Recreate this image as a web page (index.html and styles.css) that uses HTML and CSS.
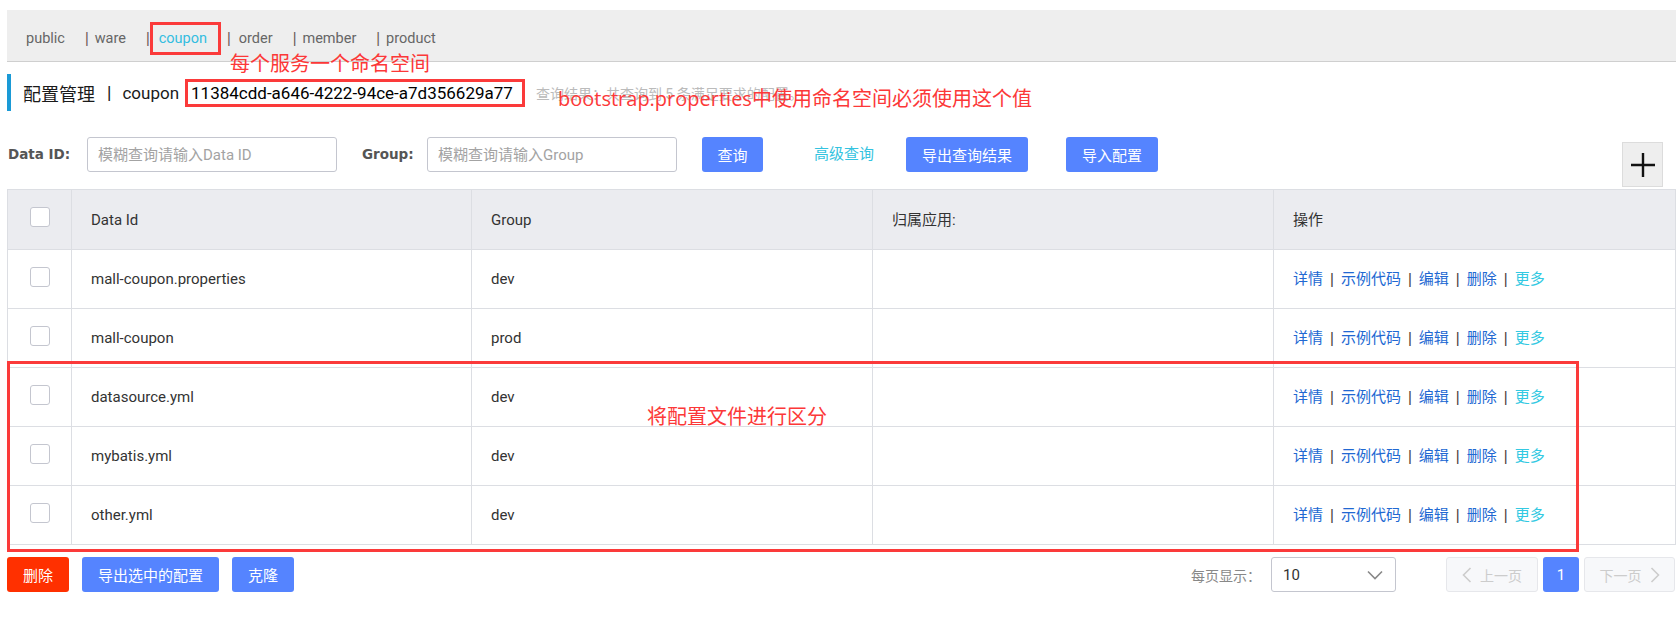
FILE: index.html
```html
<!DOCTYPE html>
<html lang="zh-CN">
<head>
<meta charset="utf-8">
<title>配置管理</title>
<link rel="stylesheet" href="styles.css">
</head>
<body>
<div class="page">
  <nav class="ns-bar">
    <span class="ns ns-first">public</span>
    <span class="sep">|</span><span class="ns">ware</span>
    <span class="sep sep-tight">|</span><span class="ns ns-active">coupon</span>
    <span class="sep sep-after-box">|</span><span class="ns">order</span>
    <span class="sep">|</span><span class="ns">member</span>
    <span class="sep">|</span><span class="ns">product</span>
  </nav>

  <div class="title-row">
    <span class="title-cn">配置管理</span>
    <span class="title-sep">|</span>
    <span class="title-en">coupon</span>
    <span class="ns-id">11384cdd-a646-4222-94ce-a7d356629a77</span>
    <span class="result">查询结果：共查询到 5 条满足要求的配置。</span>
  </div>

  <div class="filter-row">
    <span class="flabel flabel-id">Data ID:</span>
    <input class="finput" type="text" placeholder="模糊查询请输入Data ID">
    <span class="flabel flabel-group">Group:</span>
    <input class="finput" type="text" placeholder="模糊查询请输入Group">
    <button class="btn btn-primary btn-query">查询</button>
    <a class="adv-link">高级查询</a>
    <button class="btn btn-primary btn-export">导出查询结果</button>
    <button class="btn btn-primary btn-import">导入配置</button>
    <button class="add-btn" aria-label="新建配置">
      <svg width="26" height="26" viewBox="0 0 26 26"><path d="M13 1v24M1 13h24" stroke="#111" stroke-width="2.4" fill="none"/></svg>
    </button>
  </div>

  <table class="cfg-table">
    <thead>
      <tr>
        <th class="c-cb"><span class="cb"></span></th>
        <th class="c-id">Data Id</th>
        <th class="c-group">Group</th>
        <th class="c-app">归属应用:</th>
        <th class="c-op">操作</th>
      </tr>
    </thead>
    <tbody>
      <tr>
        <td class="c-cb"><span class="cb"></span></td>
        <td>mall-coupon.properties</td>
        <td>dev</td>
        <td></td>
        <td class="ops"><a class="op">详情</a><span class="op-sep">|</span><a class="op">示例代码</a><span class="op-sep">|</span><a class="op">编辑</a><span class="op-sep">|</span><a class="op">删除</a><span class="op-sep">|</span><a class="op op-more">更多</a></td>
      </tr>
      <tr>
        <td class="c-cb"><span class="cb"></span></td>
        <td>mall-coupon</td>
        <td>prod</td>
        <td></td>
        <td class="ops"><a class="op">详情</a><span class="op-sep">|</span><a class="op">示例代码</a><span class="op-sep">|</span><a class="op">编辑</a><span class="op-sep">|</span><a class="op">删除</a><span class="op-sep">|</span><a class="op op-more">更多</a></td>
      </tr>
      <tr>
        <td class="c-cb"><span class="cb"></span></td>
        <td>datasource.yml</td>
        <td>dev</td>
        <td></td>
        <td class="ops"><a class="op">详情</a><span class="op-sep">|</span><a class="op">示例代码</a><span class="op-sep">|</span><a class="op">编辑</a><span class="op-sep">|</span><a class="op">删除</a><span class="op-sep">|</span><a class="op op-more">更多</a></td>
      </tr>
      <tr>
        <td class="c-cb"><span class="cb"></span></td>
        <td>mybatis.yml</td>
        <td>dev</td>
        <td></td>
        <td class="ops"><a class="op">详情</a><span class="op-sep">|</span><a class="op">示例代码</a><span class="op-sep">|</span><a class="op">编辑</a><span class="op-sep">|</span><a class="op">删除</a><span class="op-sep">|</span><a class="op op-more">更多</a></td>
      </tr>
      <tr>
        <td class="c-cb"><span class="cb"></span></td>
        <td>other.yml</td>
        <td>dev</td>
        <td></td>
        <td class="ops"><a class="op">详情</a><span class="op-sep">|</span><a class="op">示例代码</a><span class="op-sep">|</span><a class="op">编辑</a><span class="op-sep">|</span><a class="op">删除</a><span class="op-sep">|</span><a class="op op-more">更多</a></td>
      </tr>
    </tbody>
  </table>

  <div class="footer">
    <button class="btn btn-danger btn-del">删除</button>
    <button class="btn btn-primary btn-export-sel">导出选中的配置</button>
    <button class="btn btn-primary btn-clone">克隆</button>
    <span class="page-size-label">每页显示：</span>
    <div class="select">
      <span class="select-val">10</span>
      <svg class="select-arrow" width="16" height="10" viewBox="0 0 16 10"><path d="M1 1.5l7 7 7-7" stroke="#888" stroke-width="1.6" fill="none"/></svg>
    </div>
    <button class="pg pg-prev" disabled>
      <svg width="10" height="16" viewBox="0 0 10 16"><path d="M8.5 1L1.5 8l7 7" stroke="#ccc" stroke-width="1.6" fill="none"/></svg>
      <span>上一页</span>
    </button>
    <button class="pg pg-cur">1</button>
    <button class="pg pg-next" disabled>
      <span>下一页</span>
      <svg width="10" height="16" viewBox="0 0 10 16"><path d="M1.5 1l7 7-7 7" stroke="#ccc" stroke-width="1.6" fill="none"/></svg>
    </button>
  </div>

  <div class="note note-ns">每个服务一个命名空间</div>
  <div class="note note-boot">bootstrap.properties中使用命名空间必须使用这个值</div>
  <div class="note note-split">将配置文件进行区分</div>
  <div class="mark-box"></div>
</div>
</body>
</html>
```

FILE: styles.css
```css
* { box-sizing: border-box; }

html, body {
  margin: 0;
  padding: 0;
  background: #fff;
}

body {
  font-family: "Roboto", "Noto Sans CJK SC", sans-serif;
  font-size: 15px;
  color: #333;
}

.page {
  position: relative;
  width: 1676px;
  height: 632px;
  overflow: hidden;
  padding: 10px 0 0 7px;
}

/* namespace bar */
.ns-bar {
  display: flex;
  align-items: center;
  height: 52px;
  padding: 5px 0 0 19px;
  background: #eeeeee;
  border-bottom: 1px solid #cfcfcf;
  font-size: 14.5px;
  color: #666;
}

.ns { line-height: 27px; }

.sep {
  font-family: "Liberation Sans", sans-serif;
  color: #6b5a55;
  margin: 0 6px 0 20px;
}

.sep-tight { margin-right: 0; }
.sep-after-box { margin-left: 6px; margin-right: 8px; }

.ns-active {
  color: #33bde0;
  border: 3px solid #fb3a3a;
  padding: 0 11px 0 6px;
}

/* title row */
.title-row {
  display: flex;
  align-items: center;
  height: 37px;
  margin-top: 12px;
  border-left: 4px solid #1a9ad6;
  padding-left: 12px;
  color: #1a1a1a;
}

.title-cn { font-size: 18px; }

.title-sep {
  font-family: "Liberation Sans", sans-serif;
  font-size: 17px;
  margin: 0 11px 0 12px;
  color: #222;
}

.title-en { font-size: 17px; }

.ns-id {
  font-size: 17px;
  color: #000;
  margin-left: 6px;
  height: 28px;
  line-height: 22px;
  border: 3px solid #fb3a3a;
  padding: 0 9px 0 3px;
}

.result {
  font-size: 14px;
  color: #bbb;
  margin-left: 11px;
}

/* filter row */
.filter-row {
  display: flex;
  align-items: flex-start;
  margin-top: 26px;
  height: 50px;
}

.flabel {
  font-family: "DejaVu Sans", sans-serif;
  font-weight: bold;
  font-size: 13.5px;
  color: #555;
  line-height: 35px;
}

.flabel-id { width: 80px; padding-left: 1px; }
.flabel-group { width: 65px; margin-left: 25px; }

.finput {
  width: 250px;
  height: 35px;
  border: 1px solid #c4c6cf;
  border-radius: 3px;
  padding: 0 10px;
  font-family: "Roboto", "Noto Sans CJK SC", sans-serif;
  font-size: 15px;
  color: #333;
  outline: none;
}

.finput::placeholder { color: #a3a3a3; }

.btn {
  height: 35px;
  border: none;
  border-radius: 3px;
  font-family: "Roboto", "Noto Sans CJK SC", sans-serif;
  font-size: 15px;
  color: #fff;
  padding: 0 17px;
  cursor: pointer;
}

.btn-primary { background: #5584ff; }
.btn-danger { background: #ff3000; }

.btn-query { margin-left: 25px; width: 61px; padding: 0; }
.adv-link {
  margin-left: 51px;
  line-height: 35px;
  color: #33c3e0;
  cursor: pointer;
}
.btn-export { margin-left: 32px; width: 122px; padding: 0; }
.btn-import { margin-left: 38px; width: 92px; padding: 0; }

.add-btn {
  margin-left: auto;
  margin-right: 13px;
  margin-top: 5px;
  width: 41px;
  height: 45px;
  padding: 0;
  background: #eeeeee;
  border: 1px solid #dcdcdc;
  display: flex;
  align-items: center;
  justify-content: center;
}

/* table */
.cfg-table {
  margin-top: 2px;
  width: 1669px;
  table-layout: fixed;
  border-collapse: separate;
  border-spacing: 0;
  border-top: 1px solid #dcdee3;
  border-left: 1px solid #dcdee3;
}

.cfg-table th,
.cfg-table td {
  border-right: 1px solid #dcdee3;
  border-bottom: 1px solid #dcdee3;
  padding: 0 0 0 19px;
  text-align: left;
  vertical-align: middle;
  font-weight: normal;
  line-height: 20px;
  color: #333;
  white-space: nowrap;
}

.cfg-table th {
  background: #ebecf0;
  height: 60px;
}

.cfg-table td { height: 59px; }

.cfg-table .c-cb { width: 64px; padding: 0; }
.cfg-table .c-id { width: 400px; }
.cfg-table .c-group { width: 401px; }
.cfg-table .c-app { width: 401px; }

.cb {
  display: block;
  width: 20px;
  height: 20px;
  margin: -5px auto 0;
  border: 1px solid #c4c6cf;
  border-radius: 3px;
  background: #fff;
}

.op { color: #2168d2; cursor: pointer; }
.op-more { color: #33c9e2; }

.op-sep {
  font-family: "Liberation Sans", sans-serif;
  color: #4a4040;
  margin: 0 7px;
}

/* footer */
.footer {
  display: flex;
  align-items: center;
  margin-top: 12px;
  height: 35px;
  padding-right: 1px;
}

.btn-del { width: 62px; padding: 0; }
.btn-export-sel { margin-left: 13px; width: 137px; padding: 0; }
.btn-clone { margin-left: 13px; width: 62px; padding: 0; }

.page-size-label {
  margin-left: auto;
  font-size: 14px;
  color: #888;
}

.select {
  margin-left: 10px;
  width: 125px;
  height: 35px;
  border: 1px solid #c4c6cf;
  border-radius: 3px;
  display: flex;
  align-items: center;
  padding: 0 12px 0 11px;
}

.select-val { font-size: 15px; color: #333; }
.select-arrow { margin-left: auto; }

.pg {
  height: 35px;
  border-radius: 3px;
  font-family: "Roboto", "Noto Sans CJK SC", sans-serif;
  font-size: 14px;
  padding: 0;
  display: flex;
  align-items: center;
  justify-content: center;
}

.pg-prev,
.pg-next {
  width: 92px;
  background: #f7f8fa;
  border: 1px solid #e6e7eb;
  color: #ccc;
  gap: 8px;
}

.pg-prev { margin-left: 50px; }
.pg-next { width: 91px; margin-left: 5px; }

.pg-cur {
  width: 36px;
  margin-left: 5px;
  background: #5584ff;
  border: none;
  color: #fff;
  font-size: 15px;
}

/* annotations drawn over the screenshot */
.note {
  position: absolute;
  font-family: "Open Sans", "Noto Sans CJK SC", sans-serif;
  font-size: 20px;
  line-height: 20px;
  color: #fc3838;
  white-space: nowrap;
}

.note-ns { left: 230px; top: 54px; }
.note-boot { left: 558px; top: 89px; }
.note-split { left: 647px; top: 407px; }

.mark-box {
  position: absolute;
  left: 7px;
  top: 361px;
  width: 1572px;
  height: 191px;
  border: 3px solid #fb3a3a;
}
```
